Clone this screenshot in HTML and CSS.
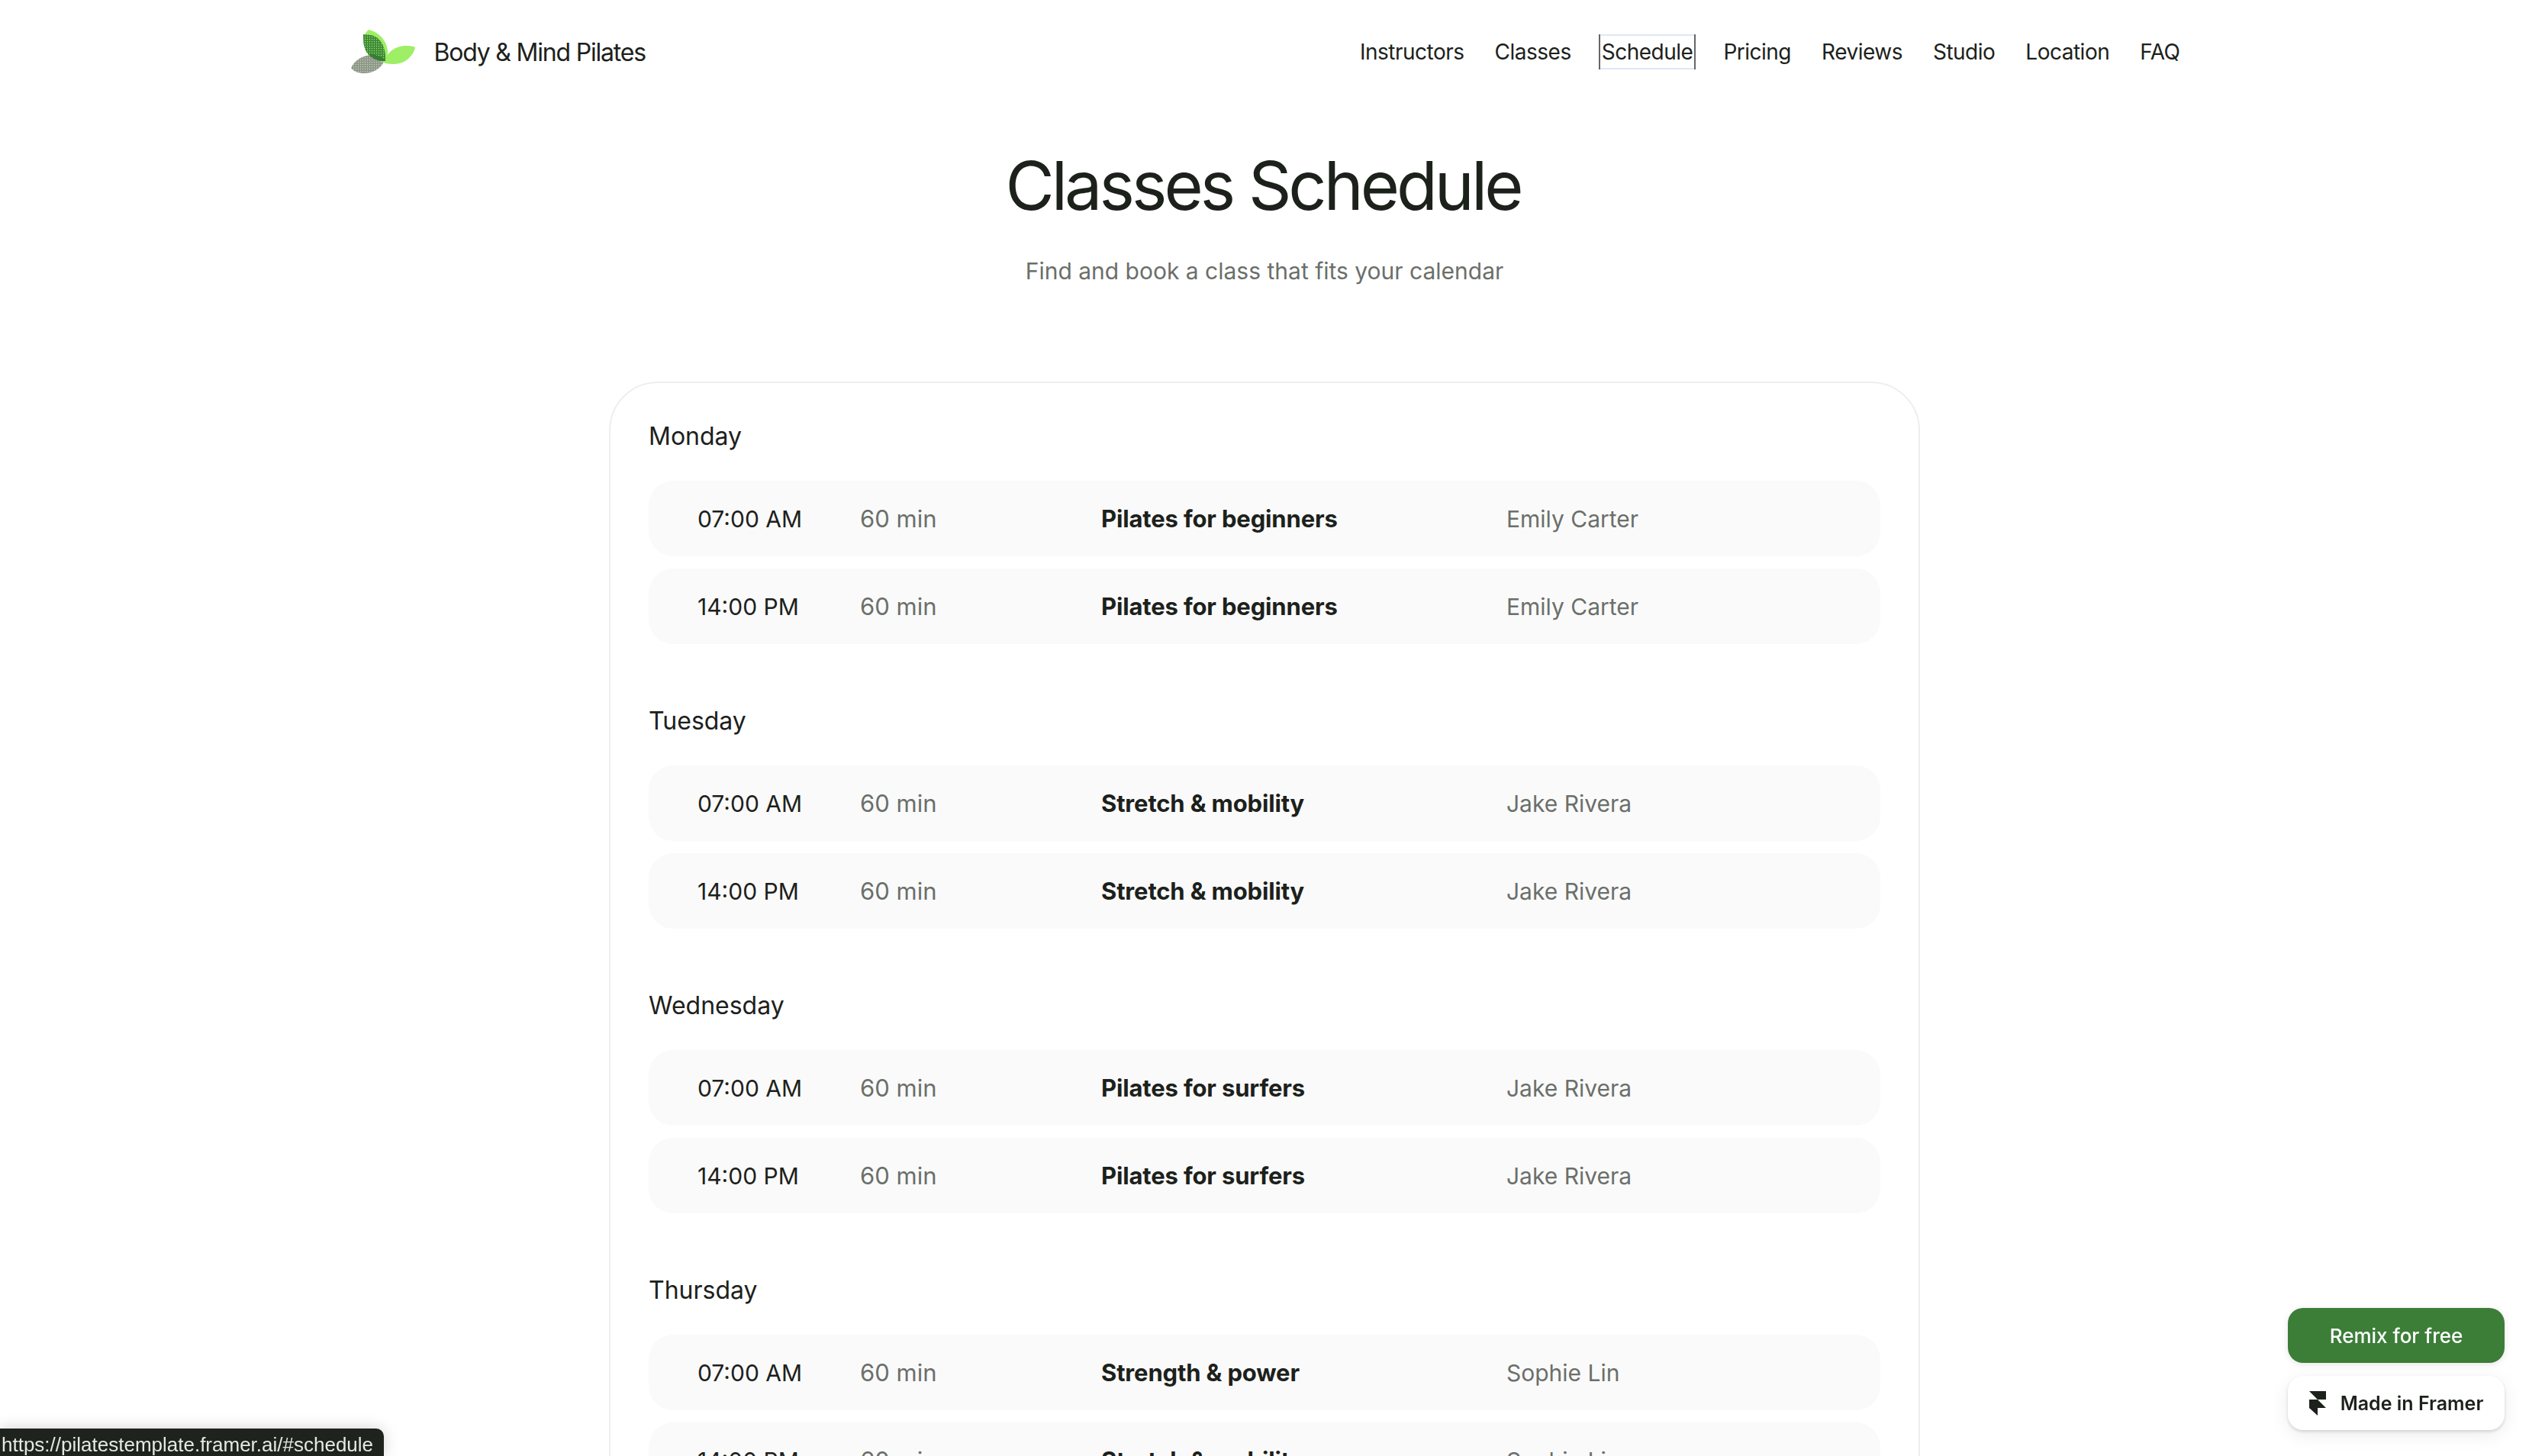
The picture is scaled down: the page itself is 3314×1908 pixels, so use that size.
FILE: index.html
```html
<!DOCTYPE html>
<html lang="en">
<head>
    <meta charset="UTF-8">
    <title>Body &amp; Mind Pilates</title>
    <link rel="stylesheet" href="styles.css">
</head>
<body>
    <header class="header">
        <a class="brand" href="#">
            <svg class="brand-logo" viewBox="460 35 86 62" width="86" height="62">
                <defs>
                    <pattern id="dotsGreen" width="3" height="3" patternUnits="userSpaceOnUse">
                        <rect width="3" height="3" fill="#3f8a3a"/>
                        <circle cx="1.5" cy="1.5" r="0.65" fill="#9eee66"/>
                    </pattern>
                    <pattern id="dotsGrey" width="3" height="3" patternUnits="userSpaceOnUse">
                        <rect width="3" height="3" fill="#8f968c"/>
                        <circle cx="1.5" cy="1.5" r="0.7" fill="#c4dcae"/>
                    </pattern>
                </defs>
                <path d="M503 80C506 68 516 59 530 58C535 58 540 58 544 60C542 70 532 82 516 82C511 82 507 82 503 80Z" fill="#9eee66"/>
                <path d="M460 87C464 78 474 70 488 70C494 70 499 72 504 77C500 87 490 94 477 94C470 94 464 92 460 87Z" fill="url(#dotsGrey)"/>
                <path d="M483 37C497 40 507 52 508 65C508 71 507 75 505 80C490 78 476 66 476 50C476 46 479 40 483 37Z" fill="#9eee66"/>
                <path d="M476 43C484 43 492 44 497 50C503 56 506 68 505 78C492 79 480 72 477 58C476 52 476 47 476 43Z" fill="url(#dotsGreen)"/>
                <path d="M483 69C490 69 498 71 504 76L505 78C496 79 489 75 483 69Z" fill="#3a7a38"/>
            </svg>
            <span class="brand-name">Body &amp; Mind Pilates</span>
        </a>
        <nav class="nav">
            <a href="#">Instructors</a>
            <a href="#">Classes</a>
            <a href="#" class="is-focused">Schedule</a>
            <a href="#">Pricing</a>
            <a href="#">Reviews</a>
            <a href="#">Studio</a>
            <a href="#">Location</a>
            <a href="#">FAQ</a>
        </nav>
    </header>

    <section class="intro">
        <h1>Classes Schedule</h1>
        <p>Find and book a class that fits your calendar</p>
    </section>

    <main class="schedule">
        <section class="day">
            <h2>Monday</h2>
            <div class="row"><span class="time">07:00 AM</span><span class="length">60 min</span><span class="title">Pilates for beginners</span><span class="teacher">Emily Carter</span></div>
            <div class="row"><span class="time">14:00 PM</span><span class="length">60 min</span><span class="title">Pilates for beginners</span><span class="teacher">Emily Carter</span></div>
        </section>
        <section class="day">
            <h2>Tuesday</h2>
            <div class="row"><span class="time">07:00 AM</span><span class="length">60 min</span><span class="title">Stretch &amp; mobility</span><span class="teacher">Jake Rivera</span></div>
            <div class="row"><span class="time">14:00 PM</span><span class="length">60 min</span><span class="title">Stretch &amp; mobility</span><span class="teacher">Jake Rivera</span></div>
        </section>
        <section class="day">
            <h2>Wednesday</h2>
            <div class="row"><span class="time">07:00 AM</span><span class="length">60 min</span><span class="title">Pilates for surfers</span><span class="teacher">Jake Rivera</span></div>
            <div class="row"><span class="time">14:00 PM</span><span class="length">60 min</span><span class="title">Pilates for surfers</span><span class="teacher">Jake Rivera</span></div>
        </section>
        <section class="day">
            <h2>Thursday</h2>
            <div class="row"><span class="time">07:00 AM</span><span class="length">60 min</span><span class="title">Strength &amp; power</span><span class="teacher">Sophie Lin</span></div>
            <div class="row"><span class="time">14:00 PM</span><span class="length">60 min</span><span class="title">Stretch &amp; mobility</span><span class="teacher">Sophie Lin</span></div>
        </section>
    </main>

    <div class="badges">
        <a class="badge badge-remix" href="#">Remix for free</a>
        <a class="badge badge-framer" href="#">
            <svg viewBox="0 0 22 32" width="22" height="32"><path d="M0 0H22V11H11Z M0 11H11L22 22H11V32L0 22Z" fill="#1c211b"/></svg>
            Made in Framer
        </a>
    </div>

    <div class="status-link">https://pilatestemplate.framer.ai/#schedule</div>
</body>
</html>
```

FILE: styles.css
```css
html {
    overflow: hidden;
    height: 100%;
}
body {
    margin: 0;
    background-color: #fff;
    color: #1c211b;
    font-family: Inter, "Liberation Sans", sans-serif;
}
a {
    color: inherit;
    text-decoration: none;
}
.header {
    display: flex;
    align-items: center;
    justify-content: space-between;
    width: 2399px;
    height: 136px;
    margin: 0 auto;
}
.brand {
    display: flex;
    align-items: center;
    gap: 23px;
    margin-left: 2px;
    font-size: 32px;
    letter-spacing: -1.2px;
}
.nav {
    display: flex;
    gap: 40px;
    font-size: 28px;
    letter-spacing: -0.5px;
}
.nav a {
    display: block;
    line-height: 46px;
}
.nav .is-focused {
    margin: 0 -4px;
    padding: 0 2px;
    border-left: 2px solid #666;
    border-right: 2px solid #666;
    box-shadow: inset 0 2px 0 #dfe8f4, inset 0 -2px 0 #dfe8f4;
}
.intro {
    text-align: center;
}
.intro h1 {
    margin: 61px 0 0;
    padding-right: 4px;
    font-size: 88px;
    font-weight: 400;
    line-height: 92px;
    letter-spacing: -4px;
}
.intro p {
    margin: 45px 0 0;
    font-size: 30px;
    line-height: 42px;
    color: #6b6f6a;
}
.schedule {
    width: 1718px;
    box-sizing: border-box;
    margin: 124px auto 0;
    padding: 50px 50px 0;
    border: 2px solid #eeeeee;
    border-radius: 64px;
}
.day {
    margin-bottom: 81px;
}
.day h2 {
    margin: 0 0 38px;
    font-size: 32px;
    font-weight: 400;
    line-height: 40px;
}
.row {
    display: grid;
    grid-template-columns: 213px 316px 531px 1fr;
    align-items: center;
    height: 99px;
    margin-bottom: 16px;
    padding-left: 64px;
    border-radius: 32px;
    background-color: #fafafa;
    font-size: 30px;
}
.length {
    font-size: 31px;
}
.length, .teacher {
    color: #6b6f6a;
}
.title {
    font-size: 31px;
    font-weight: 700;
    letter-spacing: -0.15px;
}
.badges {
    position: fixed;
    right: 32px;
    bottom: 34px;
    display: flex;
    flex-direction: column;
    gap: 17px;
    width: 284px;
}
.badge {
    display: flex;
    align-items: center;
    justify-content: center;
    gap: 19px;
    border-radius: 20px;
    font-size: 25px;
}
.badge-remix {
    height: 72px;
    background-color: #3c7e38;
    color: #fff;
    font-size: 26px;
    font-weight: 500;
    box-shadow: 0 2px 10px rgba(0, 0, 0, 0.1);
}
.badge-framer {
    height: 71px;
    background-color: #fff;
    font-weight: 600;
    box-shadow: 0 2px 4px rgba(0, 0, 0, 0.15), 0 6px 24px rgba(0, 0, 0, 0.08);
}
.status-link {
    position: fixed;
    left: 0;
    bottom: 0;
    width: 503px;
    height: 36px;
    box-sizing: border-box;
    padding: 3px 0 0 2px;
    border-top-right-radius: 10px;
    background-color: #1e241d;
    color: #e6e8e2;
    font-family: "Liberation Sans", sans-serif;
    font-size: 26px;
    line-height: 36px;
    white-space: nowrap;
    overflow: hidden;
    box-shadow: 0 0 20px rgba(0, 0, 0, 0.18);
}
```
